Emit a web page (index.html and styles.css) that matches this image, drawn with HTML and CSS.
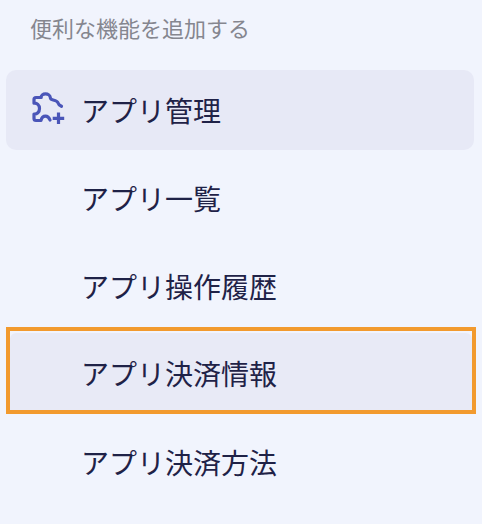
FILE: index.html
```html
<!DOCTYPE html>
<html lang="ja">
<head>
  <meta charset="UTF-8">
  <title>アプリ管理</title>
  <link rel="stylesheet" href="styles.css">
</head>
<body>
  <nav class="sidebar">
    <p class="caption">便利な機能を追加する</p>
    <a class="item parent">
      <svg class="icon" width="42" height="42" viewBox="0 0 42 42" fill="none" stroke="#4a55b8" stroke-width="3.2" stroke-linejoin="round" stroke-linecap="round">
        <path d="M22 32c-1-2.500-2.500-3.800-4.500-3.800-2.300 0-4 1.800-4.500 4.300H8a2 2 0 0 1-2-2v-4.500c3 .3 5.500-1.800 5.500-5.500S9 14.800 6 15.200V11.500a2 2 0 0 1 2-2h5.200C13 7.500 15 5.800 17.500 5.800s4.700 1.700 4.800 3.700c.1 1.500 1 2 2.200 2.300 2.500.6 5 1 5.500 3 .4 1.600 1.500 2.500 3.500 3.500"/>
        <path d="M30.500 24.500v11.500M24.700 30.300h11.500" stroke-linecap="butt"/>
      </svg>
      <span>アプリ管理</span>
    </a>
    <a class="item">アプリ一覧</a>
    <a class="item">アプリ操作履歴</a>
    <div class="highlight">
      <a class="item">アプリ決済情報</a>
    </div>
    <a class="item">アプリ決済方法</a>
  </nav>
</body>
</html>
```

FILE: styles.css
```css
html, body {
  margin: 0;
  height: 100%;
}

body {
  background: #f1f4fd;
  font-family: "Noto Sans CJK JP", "Noto Sans", sans-serif;
  overflow: hidden;
}

.sidebar {
  padding: 10px 8px 0 6px;
}

.caption {
  margin: 0 0 26px 24px;
  height: 34px;
  line-height: 34px;
  font-size: 22px;
  color: #85868f;
}

.item {
  display: flex;
  align-items: center;
  box-sizing: border-box;
  height: 80px;
  margin-bottom: 8px;
  padding-left: 75px;
  font-size: 28px;
  color: #1f2247;
}

.parent {
  position: relative;
  background: #e7e9f6;
  border-radius: 10px;
}

.icon {
  position: absolute;
  left: 22px;
  top: 18px;
}

.highlight {
  box-sizing: border-box;
  height: 87px;
  margin: -7px -2px 8px 0;
  padding-top: 2px;
  border: 4px solid #f29a2e;
}

.highlight .item {
  height: 77px;
  margin: 0;
  padding: 3px 0 0 71px;
  background: #e8eaf6;
  border-radius: 6px 6px 0 0;
}
```
